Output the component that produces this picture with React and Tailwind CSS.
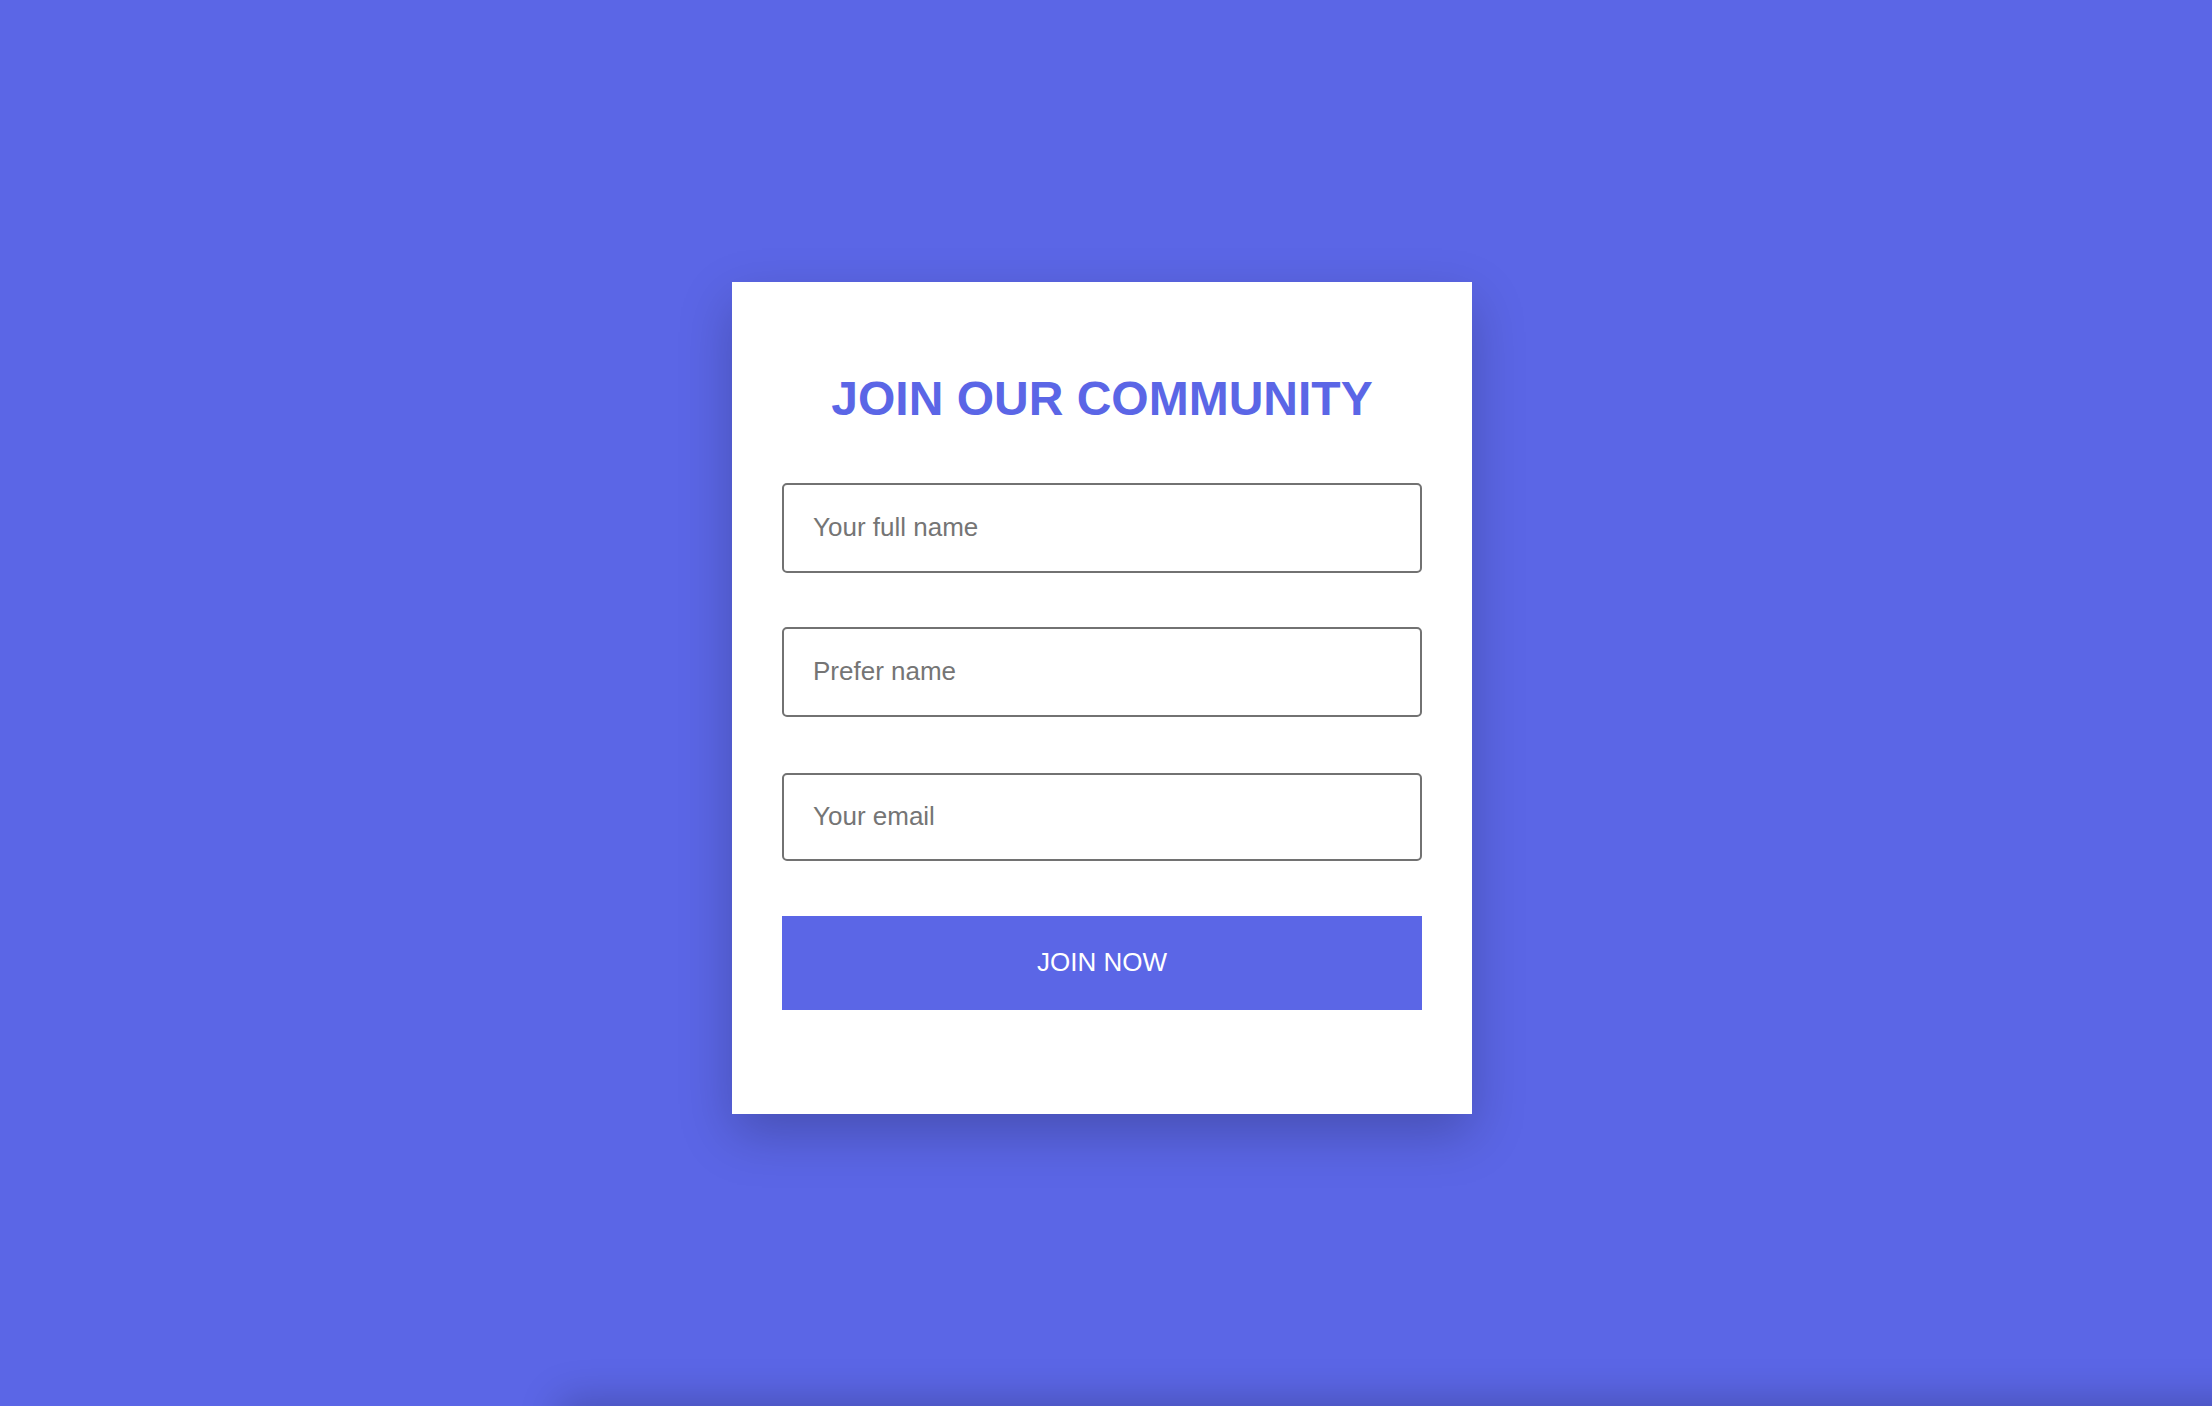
export default function App() {
  return (
    <div className="overflow-hidden bg-[#5b66e6] font-['Liberation_Sans',Arial,sans-serif]">
      <div className="flex h-[1406px] items-center justify-center pb-[11px] pr-[8px]">
        <form
          onSubmit={(e) => e.preventDefault()}
          className="flex w-[740px] flex-col bg-white px-[50px] pb-[104px] pt-[93px] shadow-[0_20px_50px_rgba(0,0,0,0.22)]"
        >
          <h1 className="text-center text-[48px] font-bold leading-none text-[#5b66e6]">
            JOIN OUR COMMUNITY
          </h1>

          <input
            type="text"
            placeholder="Your full name"
            className="mt-[60px] h-[90px] w-full rounded-[5px] border-2 border-[#727272] px-[29px] text-[26px] text-[#333] outline-none placeholder:text-[#757575]"
          />
          <input
            type="text"
            placeholder="Prefer name"
            className="mt-[54px] h-[90px] w-full rounded-[5px] border-2 border-[#727272] px-[29px] text-[26px] text-[#333] outline-none placeholder:text-[#757575]"
          />
          <input
            type="email"
            placeholder="Your email"
            className="mt-[56px] h-[88px] w-full rounded-[5px] border-2 border-[#727272] px-[29px] text-[26px] text-[#333] outline-none placeholder:text-[#757575]"
          />

          <button
            type="submit"
            className="mt-[55px] h-[94px] w-full bg-[#5b66e6] text-[26px] text-white"
          >
            JOIN NOW
          </button>
        </form>
      </div>

      {/* next section, just below the fold, casts its shadow up */}
      <div className="-mr-[120px] ml-[560px] h-[120px] bg-[#5b66e6] shadow-[0_-6px_40px_rgba(0,0,0,0.22)]" />
    </div>
  );
}
